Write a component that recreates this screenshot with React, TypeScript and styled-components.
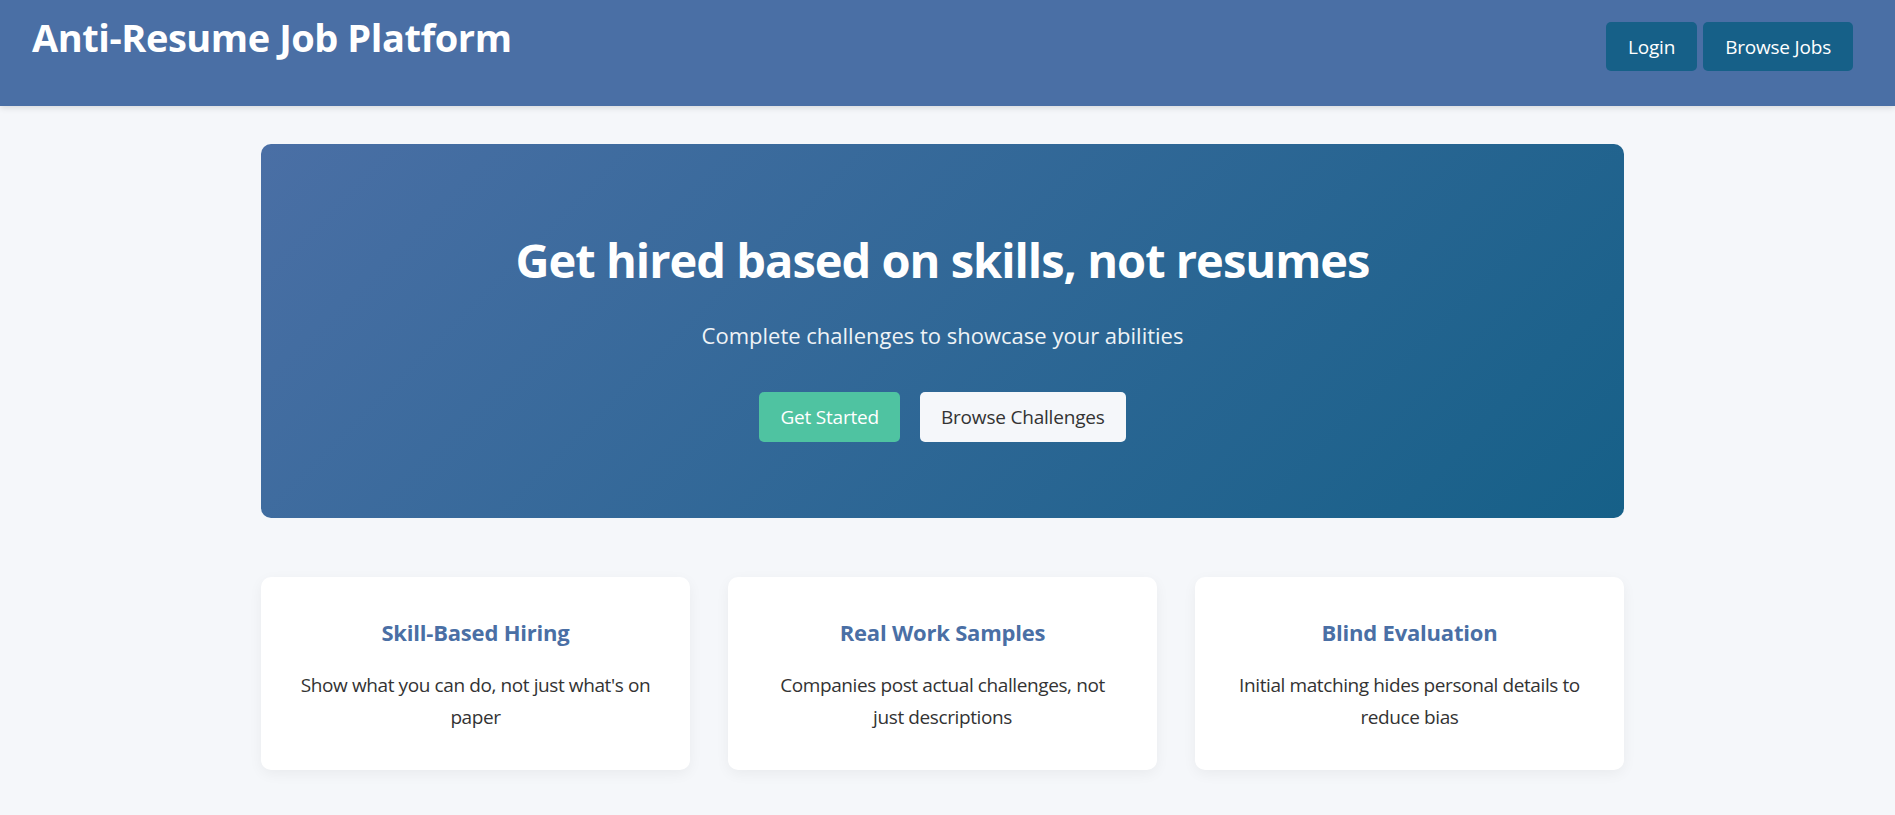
import React from "react";
import styled, { createGlobalStyle } from "styled-components";

const GlobalStyle = createGlobalStyle`
  html, body {
    margin: 0;
    padding: 0;
    background: #f5f7fa;
    font-family: "Open Sans", "Noto Sans", sans-serif;
    color: #333333;
  }
  * { box-sizing: border-box; }
`;

const Header = styled.header`
  height: 106px;
  background: #4a6fa5;
  box-shadow: 0 2px 6px rgba(0, 0, 0, 0.12);
  display: flex;
  justify-content: space-between;
  align-items: flex-start;
  padding: 13px 42px 0 32px;
`;

const Brand = styled.h1`
  margin: 0;
  font-size: 38px;
  line-height: 48px;
  letter-spacing: -0.45px;
  font-weight: 700;
  color: #ffffff;
`;

const Nav = styled.nav`
  display: flex;
  gap: 6px;
  margin-top: 9px;
`;

const NavButton = styled.button`
  height: 49px;
  padding: 0 22px;
  border: none;
  border-radius: 5px;
  background: #166088;
  color: #ffffff;
  font-family: inherit;
  font-size: 19px;
  letter-spacing: -0.2px;
  cursor: pointer;
`;

const Main = styled.main`
  padding: 38px 10px 45px 0;
  display: flex;
  flex-direction: column;
  align-items: center;
`;

const Hero = styled.section`
  width: 1363px;
  height: 374px;
  border-radius: 10px;
  background: linear-gradient(135deg, #4a6fa5 0%, #166088 100%);
  color: #ffffff;
  display: flex;
  flex-direction: column;
  align-items: center;
  padding-top: 86px;
`;

const HeroTitle = styled.h2`
  margin: 0;
  font-size: 47px;
  line-height: 60px;
  letter-spacing: -1px;
  font-weight: 700;
`;

const HeroSubtitle = styled.p`
  margin: 32px 0 0;
  font-size: 22px;
  line-height: 26px;
  opacity: 0.92;
`;

const HeroActions = styled.div`
  display: flex;
  gap: 20px;
  margin-top: 44px;
`;

const HeroButton = styled.button<{ $variant: "primary" | "light" }>`
  height: 50px;
  padding: 0 21px;
  border: none;
  border-radius: 5px;
  font-family: inherit;
  font-size: 19px;
  letter-spacing: -0.2px;
  cursor: pointer;
  background: ${(p) => (p.$variant === "primary" ? "#4fc3a1" : "#f5f7fa")};
  color: ${(p) => (p.$variant === "primary" ? "#ffffff" : "#333333")};
`;

const Features = styled.section`
  width: 1363px;
  margin-top: 59px;
  display: grid;
  grid-template-columns: repeat(3, 1fr);
  gap: 38px;
`;

const Card = styled.article`
  height: 193px;
  background: #ffffff;
  border-radius: 10px;
  box-shadow: 0 4px 14px rgba(0, 0, 0, 0.05);
  padding: 41px 36px 37px;
  text-align: center;
`;

const CardTitle = styled.h3`
  margin: 0;
  font-size: 22px;
  line-height: 28px;
  letter-spacing: -0.2px;
  font-weight: 700;
  color: #4a6fa5;
`;

const CardText = styled.p`
  margin: 23px 0 0;
  font-size: 19px;
  line-height: 32px;
  letter-spacing: -0.4px;
  color: #333333;
`;

const features = [
  { title: "Skill-Based Hiring", text: "Show what you can do, not just what's on paper" },
  { title: "Real Work Samples", text: "Companies post actual challenges, not just descriptions" },
  { title: "Blind Evaluation", text: "Initial matching hides personal details to reduce bias" },
];

export default function App() {
  return (
    <>
      <GlobalStyle />
      <Header>
        <Brand>Anti-Resume Job Platform</Brand>
        <Nav>
          <NavButton>Login</NavButton>
          <NavButton>Browse Jobs</NavButton>
        </Nav>
      </Header>
      <Main>
        <Hero>
          <HeroTitle>Get hired based on skills, not resumes</HeroTitle>
          <HeroSubtitle>Complete challenges to showcase your abilities</HeroSubtitle>
          <HeroActions>
            <HeroButton $variant="primary">Get Started</HeroButton>
            <HeroButton $variant="light">Browse Challenges</HeroButton>
          </HeroActions>
        </Hero>
        <Features>
          {features.map((f) => (
            <Card key={f.title}>
              <CardTitle>{f.title}</CardTitle>
              <CardText>{f.text}</CardText>
            </Card>
          ))}
        </Features>
      </Main>
    </>
  );
}
